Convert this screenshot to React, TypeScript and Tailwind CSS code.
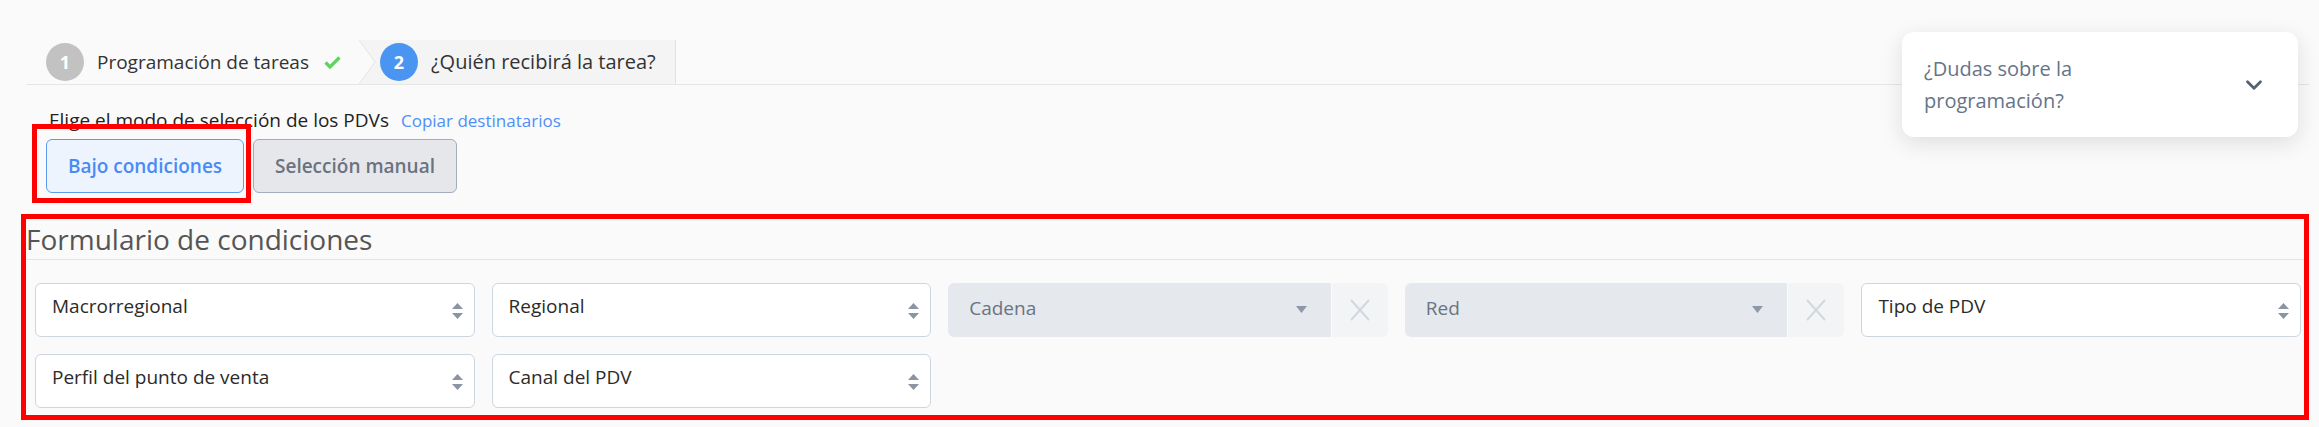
import { ChevronDown } from "lucide-react";

const font = { fontFamily: '"Open Sans", "Liberation Sans", sans-serif' };

function UpDown() {
  return (
    <svg width="11" height="16" viewBox="0 0 11 16" className="shrink-0">
      <path d="M5.5 0 L11 6 L0 6 Z" fill="#8a94a3" />
      <path d="M0 10 L11 10 L5.5 16 Z" fill="#8a94a3" />
    </svg>
  );
}

function Select({ label }: { label: string }) {
  return (
    <div className="flex h-[54px] items-start justify-between rounded-[6px] border border-[#cdd5df] bg-white pl-[16px] pr-[11px] pt-[9px]">
      <span className="text-[19px] leading-[26px] text-[#2b2b2b]">{label}</span>
      <div className="mt-[10px]">
        <UpDown />
      </div>
    </div>
  );
}

function DisabledSelect({ label }: { label: string }) {
  return (
    <div className="flex h-[54px] overflow-hidden rounded-[6px]">
      <div className="flex flex-1 items-center justify-between bg-[#e5e8ec] pb-[4px] pl-[21px] pr-[24px]">
        <span className="text-[19px] leading-[26px] text-[#6b7483]">{label}</span>
        <svg width="11" height="7" viewBox="0 0 11 7" className="mt-[2px]">
          <path d="M0 0 L11 0 L5.5 7 Z" fill="#8e98a8" />
        </svg>
      </div>
      <div className="ml-px flex w-[56px] items-center justify-center bg-[#f2f4f6]">
        <svg width="20" height="22" viewBox="0 0 20 22">
          <path d="M1 1 L19 21 M19 1 L1 21" stroke="#d3d8de" strokeWidth="2" />
        </svg>
      </div>
    </div>
  );
}

export default function App() {
  return (
    <div className="relative h-[427px] w-[2319px] overflow-hidden bg-[#fafafa] pl-[26px] pr-[10px] pt-[40px]" style={font}>
      {/* steps */}
      <div className="flex h-[45px] border-b border-[#e6e6e6]">
        <div className="flex items-center pl-[20px]">
          <span className="flex h-[38px] w-[38px] items-center justify-center rounded-full bg-[#c2c2c2] text-[18px] font-bold text-white">1</span>
          <span className="ml-[13px] text-[19px] text-[#333]">Programación de tareas</span>
          <svg width="17" height="13" viewBox="0 0 17 13" className="ml-[15px]">
            <path d="M1.5 6.5 L6 11 L15.5 1.5" stroke="#5fd35f" strokeWidth="3.2" fill="none" />
          </svg>
        </div>
        <div className="ml-[19px] flex items-center border-r border-[#e3e3e3] bg-[#f4f4f4] pr-[19px]">
          <svg width="17" height="44" viewBox="0 0 17 44" className="-ml-px self-start">
            <path d="M0 0 L16 22 L0 44 Z" fill="#fafafa" />
            <path d="M0 0 L16 22 L0 44" stroke="#e4e4e4" strokeWidth="1" fill="none" />
          </svg>
          <span className="ml-[4px] flex h-[38px] w-[38px] items-center justify-center rounded-full bg-[#4a95f1] text-[18px] font-bold text-white">2</span>
          <span className="ml-[13px] text-[20px] text-[#333]">¿Quién recibirá la tarea?</span>
        </div>
      </div>

      {/* mode */}
      <div className="ml-[23px] mt-[23px] flex items-baseline gap-[12px] leading-[24px]">
        <span className="text-[19px] text-[#222]">Elige el modo de selección de los PDVs</span>
        <span className="text-[17px] text-[#4f8ff7]">Copiar destinatarios</span>
      </div>
      <div className="ml-[20px] mt-[6px] flex gap-[9px]">
        <div className="relative">
          <button className="h-[54px] w-[198px] rounded-[6px] border border-[#5b9bf0] bg-[#edf4fe] text-[19px] font-semibold text-[#4a8af4]">
            Bajo condiciones
          </button>
          <span className="pointer-events-none absolute -bottom-[10px] -left-[14px] -right-[7px] -top-[15px] border-[5px] border-[#ff0000]" />
        </div>
        <button className="h-[54px] w-[204px] rounded-[6px] border border-[#a3adbb] bg-[#e5e7eb] text-[19px] font-semibold text-[#6b7280]">
          Selección manual
        </button>
      </div>

      {/* form */}
      <div className="relative mr-[5px] mt-[26px] pb-[7px] pt-[3px]">
        <h2 className="border-b border-[#e3e5e8] pb-[3px] text-[28px] font-normal leading-[34px] text-[#555]">Formulario de condiciones</h2>
        <div className="mt-[23px] grid grid-cols-5 gap-[17px] pl-[9px] pr-[3px]">
          <Select label="Macrorregional" />
          <Select label="Regional" />
          <DisabledSelect label="Cadena" />
          <DisabledSelect label="Red" />
          <Select label="Tipo de PDV" />
          <Select label="Perfil del punto de venta" />
          <Select label="Canal del PDV" />
        </div>
        <span className="pointer-events-none absolute -bottom-[5px] -left-[5px] -right-[5px] -top-[5px] border-[5px] border-[#ff0000]" />
      </div>

      {/* help card */}
      <div className="absolute right-[21px] top-[32px] flex h-[105px] w-[396px] items-center justify-between rounded-[12px] bg-white pl-[22px] pr-[31px] shadow-[0_6px_22px_rgba(15,23,42,0.12)]">
        <span className="text-[20px] leading-[32px] text-[#667488]">
          ¿Dudas sobre la
          <br />
          programación?
        </span>
        <ChevronDown size={26} strokeWidth={2.6} color="#556274" />
      </div>
    </div>
  );
}
